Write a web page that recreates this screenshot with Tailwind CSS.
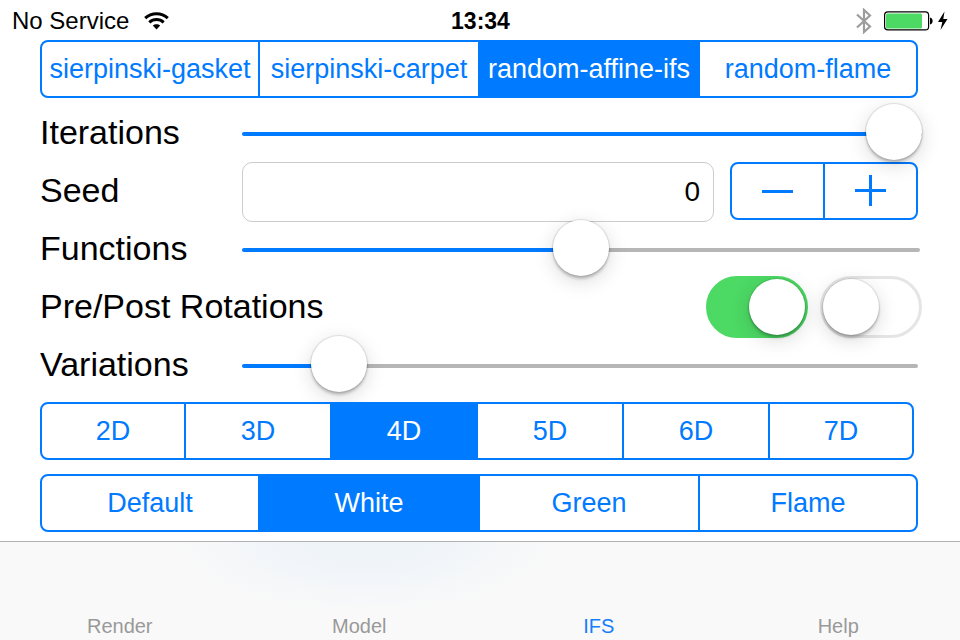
<!DOCTYPE html>
<html lang="en">
<head>
<meta charset="utf-8">
<meta name="viewport" content="width=device-width, initial-scale=1">
<title>IFS</title>
<script src="https://cdn.jsdelivr.net/npm/@tailwindcss/browser@4"></script>
</head>
<body class="flex min-h-screen flex-col bg-white font-['Liberation_Sans',Arial,sans-serif] text-black">

<header class="grid h-10 grid-cols-[1fr_auto_1fr] items-center pt-px pr-[11px] pl-3 text-[24px] leading-7">
  <div class="flex items-center gap-[15px]">
    <span>No Service</span>
    <svg class="h-[18px] w-[25px]" viewBox="0 0 25 18" aria-label="Wi-Fi" role="img" fill="none" stroke="#000" stroke-width="3">
      <path d="M1.2 6.2C7.5 .2 17.5 .2 23.8 6.2"/>
      <path d="M5.3 10.4C9.5 6.6 15.500 6.600 19.700 10.400"/>
      <path d="M12.500 17.500L8.800 13.600C10.700 11.800 14.300 11.800 16.200 13.600Z" fill="#000" stroke="none"/>
    </svg>
  </div>
  <time class="text-[23px] font-bold">13:34</time>
  <div class="flex items-center justify-end">
    <svg class="mr-3 h-[26px] w-4" viewBox="0 0 16 26" aria-label="Bluetooth" role="img" fill="none" stroke="#9c9c9c" stroke-width="2.2">
      <path d="M1 6.500L14 18.500L8 24V2L14 7.500L1 19.500"/>
    </svg>
    <svg class="h-5 w-[65px]" viewBox="0 0 65 20" aria-label="Battery charging" role="img">
      <rect x=".6" y=".9" width="44" height="18" rx="3.200" fill="#fff" stroke="#000" stroke-width="1.200"/>
      <rect x="2" y="2.500" width="36" height="15" rx="1.500" fill="#4cd964"/>
      <path d="M46 6.500C49.500 7 49.500 13 46 13.500Z" fill="#000"/>
      <path d="M60.500 .500L54 11H58.300L56.500 19L63.500 8H59.300Z" fill="#000"/>
    </svg>
  </div>
</header>

<main class="flex flex-col pr-[38px] pl-10">
  <fieldset class="mr-1 flex h-[58px] divide-x-2 divide-[#007aff] overflow-hidden rounded-lg border-2 border-[#007aff] text-[27px] leading-8 text-[#007aff]" aria-label="Type">
    <label class="flex min-w-0 flex-1 items-center justify-center has-checked:bg-[#007aff] has-checked:text-white"><input class="sr-only" type="radio" name="type">sierpinski-gasket</label>
    <label class="flex min-w-0 flex-1 items-center justify-center px-px has-checked:bg-[#007aff] has-checked:text-white"><input class="sr-only" type="radio" name="type">sierpinski-carpet</label>
    <label class="flex min-w-0 flex-1 items-center justify-center px-px has-checked:bg-[#007aff] has-checked:text-white"><input class="sr-only" type="radio" name="type" checked>random-affine-ifs</label>
    <label class="flex min-w-0 flex-1 items-center justify-center has-checked:bg-[#007aff] has-checked:text-white"><input class="sr-only" type="radio" name="type">random-flame</label>
  </fieldset>

  <div class="mt-[5px] flex flex-col text-[34px] leading-10">
    <div class="flex h-[58px] items-center">
      <label class="w-[202px] shrink-0" for="iterations">Iterations</label>
      <input id="iterations" type="range" min="0" max="1000" value="1000" class="relative mt-1 h-14 min-w-0 flex-1 appearance-none bg-transparent [&::-webkit-slider-runnable-track]:h-1 [&::-webkit-slider-runnable-track]:rounded-full [&::-webkit-slider-runnable-track]:bg-[#007aff] [&::-webkit-slider-thumb]:-mt-7 [&::-webkit-slider-thumb]:size-14 [&::-webkit-slider-thumb]:appearance-none [&::-webkit-slider-thumb]:rounded-full [&::-webkit-slider-thumb]:bg-white [&::-webkit-slider-thumb]:shadow-[0_0_1px_1px_rgba(0,0,0,0.1),0_3px_3px_rgba(0,0,0,0.2),0_5px_20px_rgba(0,0,0,0.15)]">
    </div>
    <div class="flex h-[58px] items-start">
      <label class="w-[202px] shrink-0 self-center" for="seed">Seed</label>
      <input id="seed" type="text" inputmode="numeric" value="0" class="mt-px h-[60px] min-w-0 flex-1 rounded-[10px] border border-[#ccc] bg-white pr-[13px] text-right text-[28px]">
      <div class="mt-px mr-1 ml-4 flex h-[58px] w-[188px] divide-x-2 divide-[#007aff] rounded-lg border-2 border-[#007aff]">
        <button type="button" aria-label="Decrease seed" class="flex flex-1 items-center justify-center"><span class="h-[3px] w-[31px] bg-[#007aff]"></span></button>
        <button type="button" aria-label="Increase seed" class="flex flex-1 items-center justify-center pb-px">
          <svg class="size-[31px]" viewBox="0 0 31 31" fill="#007aff"><path d="M14 0H17V14H31V17H17V31H14V17H0V14H14Z"/></svg>
        </button>
      </div>
    </div>
    <div class="mr-0.5 flex h-[58px] items-center">
      <label class="w-[202px] shrink-0" for="functions">Functions</label>
      <input id="functions" type="range" min="0" max="1000" value="500" class="relative mt-1 h-14 min-w-0 flex-1 appearance-none bg-transparent [&::-webkit-slider-runnable-track]:h-1 [&::-webkit-slider-runnable-track]:rounded-full [&::-webkit-slider-runnable-track]:bg-[linear-gradient(to_right,#007aff_50%,#b6b6b6_50%)] [&::-webkit-slider-thumb]:-mt-7 [&::-webkit-slider-thumb]:size-14 [&::-webkit-slider-thumb]:appearance-none [&::-webkit-slider-thumb]:rounded-full [&::-webkit-slider-thumb]:bg-white [&::-webkit-slider-thumb]:shadow-[0_0_1px_1px_rgba(0,0,0,0.1),0_3px_3px_rgba(0,0,0,0.2),0_5px_20px_rgba(0,0,0,0.15)]">
    </div>
    <div class="flex h-[58px] items-center">
      <span class="flex-1">Pre/Post Rotations</span>
      <div class="mt-0.5 flex gap-3">
        <input type="checkbox" role="switch" checked aria-label="Pre rotations" class="h-[62px] w-[102px] appearance-none rounded-full border-[3px] border-[#e5e5e5] bg-white before:block before:size-14 before:rounded-full before:bg-white before:shadow-[0_0_1px_1px_rgba(0,0,0,0.1),0_3px_3px_rgba(0,0,0,0.2),0_5px_20px_rgba(0,0,0,0.15)] checked:border-[#4cd964] checked:bg-[#4cd964] checked:before:ml-10">
        <input type="checkbox" role="switch" aria-label="Post rotations" class="h-[62px] w-[102px] appearance-none rounded-full border-[3px] border-[#e5e5e5] bg-white before:block before:size-14 before:rounded-full before:bg-white before:shadow-[0_0_1px_1px_rgba(0,0,0,0.1),0_3px_3px_rgba(0,0,0,0.2),0_5px_20px_rgba(0,0,0,0.15)] checked:border-[#4cd964] checked:bg-[#4cd964] checked:before:ml-10">
      </div>
    </div>
    <div class="mr-1 flex h-[58px] items-center">
      <label class="w-[202px] shrink-0" for="variations">Variations</label>
      <input id="variations" type="range" min="0" max="1000" value="111" class="mt-1 h-14 min-w-0 flex-1 appearance-none bg-transparent [&::-webkit-slider-runnable-track]:h-1 [&::-webkit-slider-runnable-track]:rounded-full [&::-webkit-slider-runnable-track]:bg-[linear-gradient(to_right,#007aff_14%,#b6b6b6_14%)] [&::-webkit-slider-thumb]:-mt-7 [&::-webkit-slider-thumb]:size-14 [&::-webkit-slider-thumb]:appearance-none [&::-webkit-slider-thumb]:rounded-full [&::-webkit-slider-thumb]:bg-white [&::-webkit-slider-thumb]:shadow-[0_0_1px_1px_rgba(0,0,0,0.1),0_3px_3px_rgba(0,0,0,0.2),0_5px_20px_rgba(0,0,0,0.15)]">
    </div>
  </div>

  <fieldset class="mt-[9px] mr-2 flex h-[58px] divide-x-2 divide-[#007aff] overflow-hidden rounded-lg border-2 border-[#007aff] text-[27px] leading-8 text-[#007aff]" aria-label="Dimensions">
    <label class="flex min-w-0 flex-1 items-center justify-center has-checked:bg-[#007aff] has-checked:text-white"><input class="sr-only" type="radio" name="dim">2D</label>
    <label class="flex min-w-0 flex-1 items-center justify-center px-px has-checked:bg-[#007aff] has-checked:text-white"><input class="sr-only" type="radio" name="dim">3D</label>
    <label class="flex min-w-0 flex-1 items-center justify-center px-px has-checked:bg-[#007aff] has-checked:text-white"><input class="sr-only" type="radio" name="dim" checked>4D</label>
    <label class="flex min-w-0 flex-1 items-center justify-center px-px has-checked:bg-[#007aff] has-checked:text-white"><input class="sr-only" type="radio" name="dim">5D</label>
    <label class="flex min-w-0 flex-1 items-center justify-center px-px has-checked:bg-[#007aff] has-checked:text-white"><input class="sr-only" type="radio" name="dim">6D</label>
    <label class="flex min-w-0 flex-1 items-center justify-center has-checked:bg-[#007aff] has-checked:text-white"><input class="sr-only" type="radio" name="dim">7D</label>
  </fieldset>

  <fieldset class="mt-[14px] mr-1 flex h-[58px] divide-x-2 divide-[#007aff] overflow-hidden rounded-lg border-2 border-[#007aff] text-[27px] leading-8 text-[#007aff]" aria-label="Colour">
    <label class="flex min-w-0 flex-1 items-center justify-center has-checked:bg-[#007aff] has-checked:text-white"><input class="sr-only" type="radio" name="colour">Default</label>
    <label class="flex min-w-0 flex-1 items-center justify-center px-px has-checked:bg-[#007aff] has-checked:text-white"><input class="sr-only" type="radio" name="colour" checked>White</label>
    <label class="flex min-w-0 flex-1 items-center justify-center px-px has-checked:bg-[#007aff] has-checked:text-white"><input class="sr-only" type="radio" name="colour">Green</label>
    <label class="flex min-w-0 flex-1 items-center justify-center has-checked:bg-[#007aff] has-checked:text-white"><input class="sr-only" type="radio" name="colour">Flame</label>
  </fieldset>
</main>

<nav class="mt-[9px] flex flex-1 items-end border-t border-[#b2b2b2] bg-[#f9f9f9] bg-[radial-gradient(ellipse_190px_70px_at_38%_0%,#eff4f9_30%,#f9f9f9_100%)] pt-16 pr-0.5 text-[20px] leading-6 text-[#999]">
  <a href="#render" class="flex-1 pb-0.5 text-center">Render</a>
  <a href="#model" class="flex-1 pb-0.5 text-center">Model</a>
  <a href="#ifs" class="flex-1 pb-0.5 text-center text-[#157efb]" aria-current="page">IFS</a>
  <a href="#help" class="flex-1 pb-0.5 text-center">Help</a>
</nav>

</body>
</html>
